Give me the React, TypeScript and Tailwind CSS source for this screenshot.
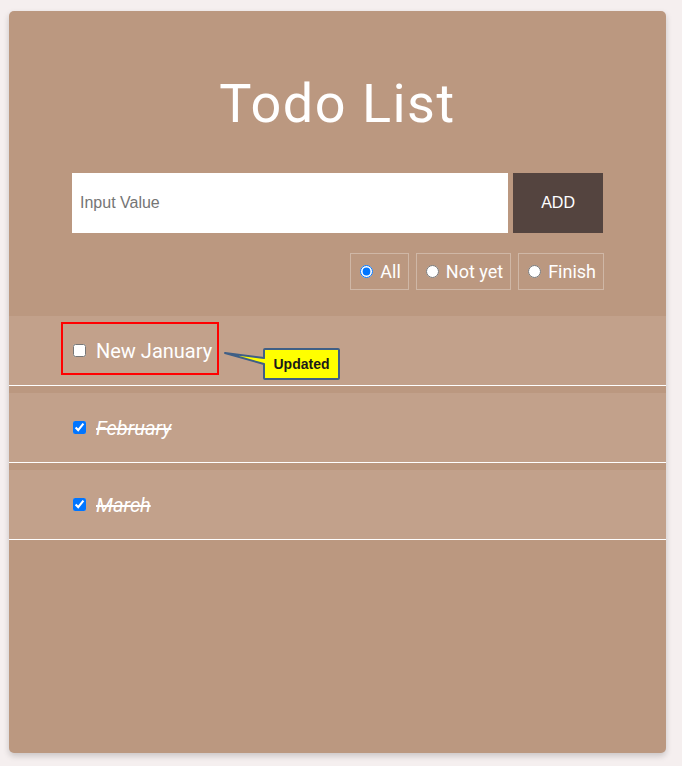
import React, { useState } from 'react';

interface Todo {
  id: number;
  text: string;
  done: boolean;
}

const initialTodos: Todo[] = [
  { id: 1, text: 'New January', done: false },
  { id: 2, text: 'February', done: true },
  { id: 3, text: 'March', done: true },
];

const filters = ['All', 'Not yet', 'Finish'];

const App: React.FC = () => {
  const [todos, setTodos] = useState<Todo[]>(initialTodos);
  const [filter, setFilter] = useState('All');
  const [value, setValue] = useState('');

  const toggle = (id: number) =>
    setTodos(todos.map((t) => (t.id === id ? { ...t, done: !t.done } : t)));

  const addTodo = () => {
    if (!value.trim()) return;
    setTodos([...todos, { id: Date.now(), text: value, done: false }]);
    setValue('');
  };

  const visible = todos.filter((t) =>
    filter === 'All' ? true : filter === 'Finish' ? t.done : !t.done
  );

  return (
    <div className="min-h-[766px] bg-[#f5efef] pt-[11px] pl-[9px]">
      <div className="w-[657px] h-[742px] rounded-[5px] bg-[#bb9880] shadow-[0_3px_6px_rgba(0,0,0,0.18)] font-['Roboto',sans-serif]">
        <h1 className="pt-[56px] text-center text-[54px] leading-[74px] tracking-[1.5px] text-white font-normal">
          Todo List
        </h1>

        <div className="mt-[32px] flex px-[63px]">
          <input
            value={value}
            onChange={(e) => setValue(e.target.value)}
            placeholder="Input Value"
            className="h-[60px] w-[437px] bg-white px-[8px] text-[16px] font-['Liberation_Sans',Arial,sans-serif] text-gray-800 placeholder:text-[#757575] outline-none"
          />
          <button
            onClick={addTodo}
            className="ml-[5px] h-[60px] w-[90px] bg-[#54443f] text-[16px] text-white font-['Liberation_Sans',Arial,sans-serif]"
          >
            ADD
          </button>
        </div>

        <div className="mt-[20px] flex justify-end gap-[7px] pr-[62px]">
          {filters.map((f) => (
            <label
              key={f}
              className="flex h-[37px] items-center border border-white/30 pl-[9px] pr-[7px] text-[18px] text-white cursor-pointer"
            >
              <input
                type="radio"
                name="filter"
                checked={filter === f}
                onChange={() => setFilter(f)}
                className="m-0 mr-[7px] h-[13px] w-[13px]"
              />
              {f}
            </label>
          ))}
        </div>

        <ul className="mt-[26px]">
          {visible.map((todo, i) => (
            <li
              key={todo.id}
              className="relative mt-[7px] flex h-[70px] items-center border-b border-white bg-[#c2a18b] pl-[63px]"
            >
              <input
                type="checkbox"
                checked={todo.done}
                onChange={() => toggle(todo.id)}
                className="m-0 ml-[1px] h-[13px] w-[13px]"
              />
              <span
                className={`ml-[10px] text-[20px] text-white ${todo.done ? 'italic line-through' : ''}`}
              >
                {todo.text}
              </span>

              {i === 0 && !todo.done && (
                <>
                  <div className="pointer-events-none absolute left-[52px] top-[6px] h-[53px] w-[158px] border-2 border-[#ff0000]" />
                  <svg
                    className="pointer-events-none absolute left-[212px] top-[29px]"
                    width="132"
                    height="40"
                    viewBox="0 0 132 40"
                  >
                    <path
                      d="M 4 8 L 43 13 L 43 5 Q 43 4 44 4 L 117 4 Q 118 4 118 5 L 118 33 Q 118 34 117 34 L 44 34 Q 43 34 43 33 L 43 19 Z"
                      fill="#ffff00"
                      stroke="#3f5f86"
                      strokeWidth="2"
                      strokeLinejoin="round"
                    />
                  </svg>
                  <span className="pointer-events-none absolute left-[255px] top-[33px] w-[75px] text-center text-[14px] font-bold leading-[30px] text-[#1a1a1a] font-['Liberation_Sans',Arial,sans-serif]">
                    Updated
                  </span>
                </>
              )}
            </li>
          ))}
        </ul>
      </div>
    </div>
  );
};

export default App;
